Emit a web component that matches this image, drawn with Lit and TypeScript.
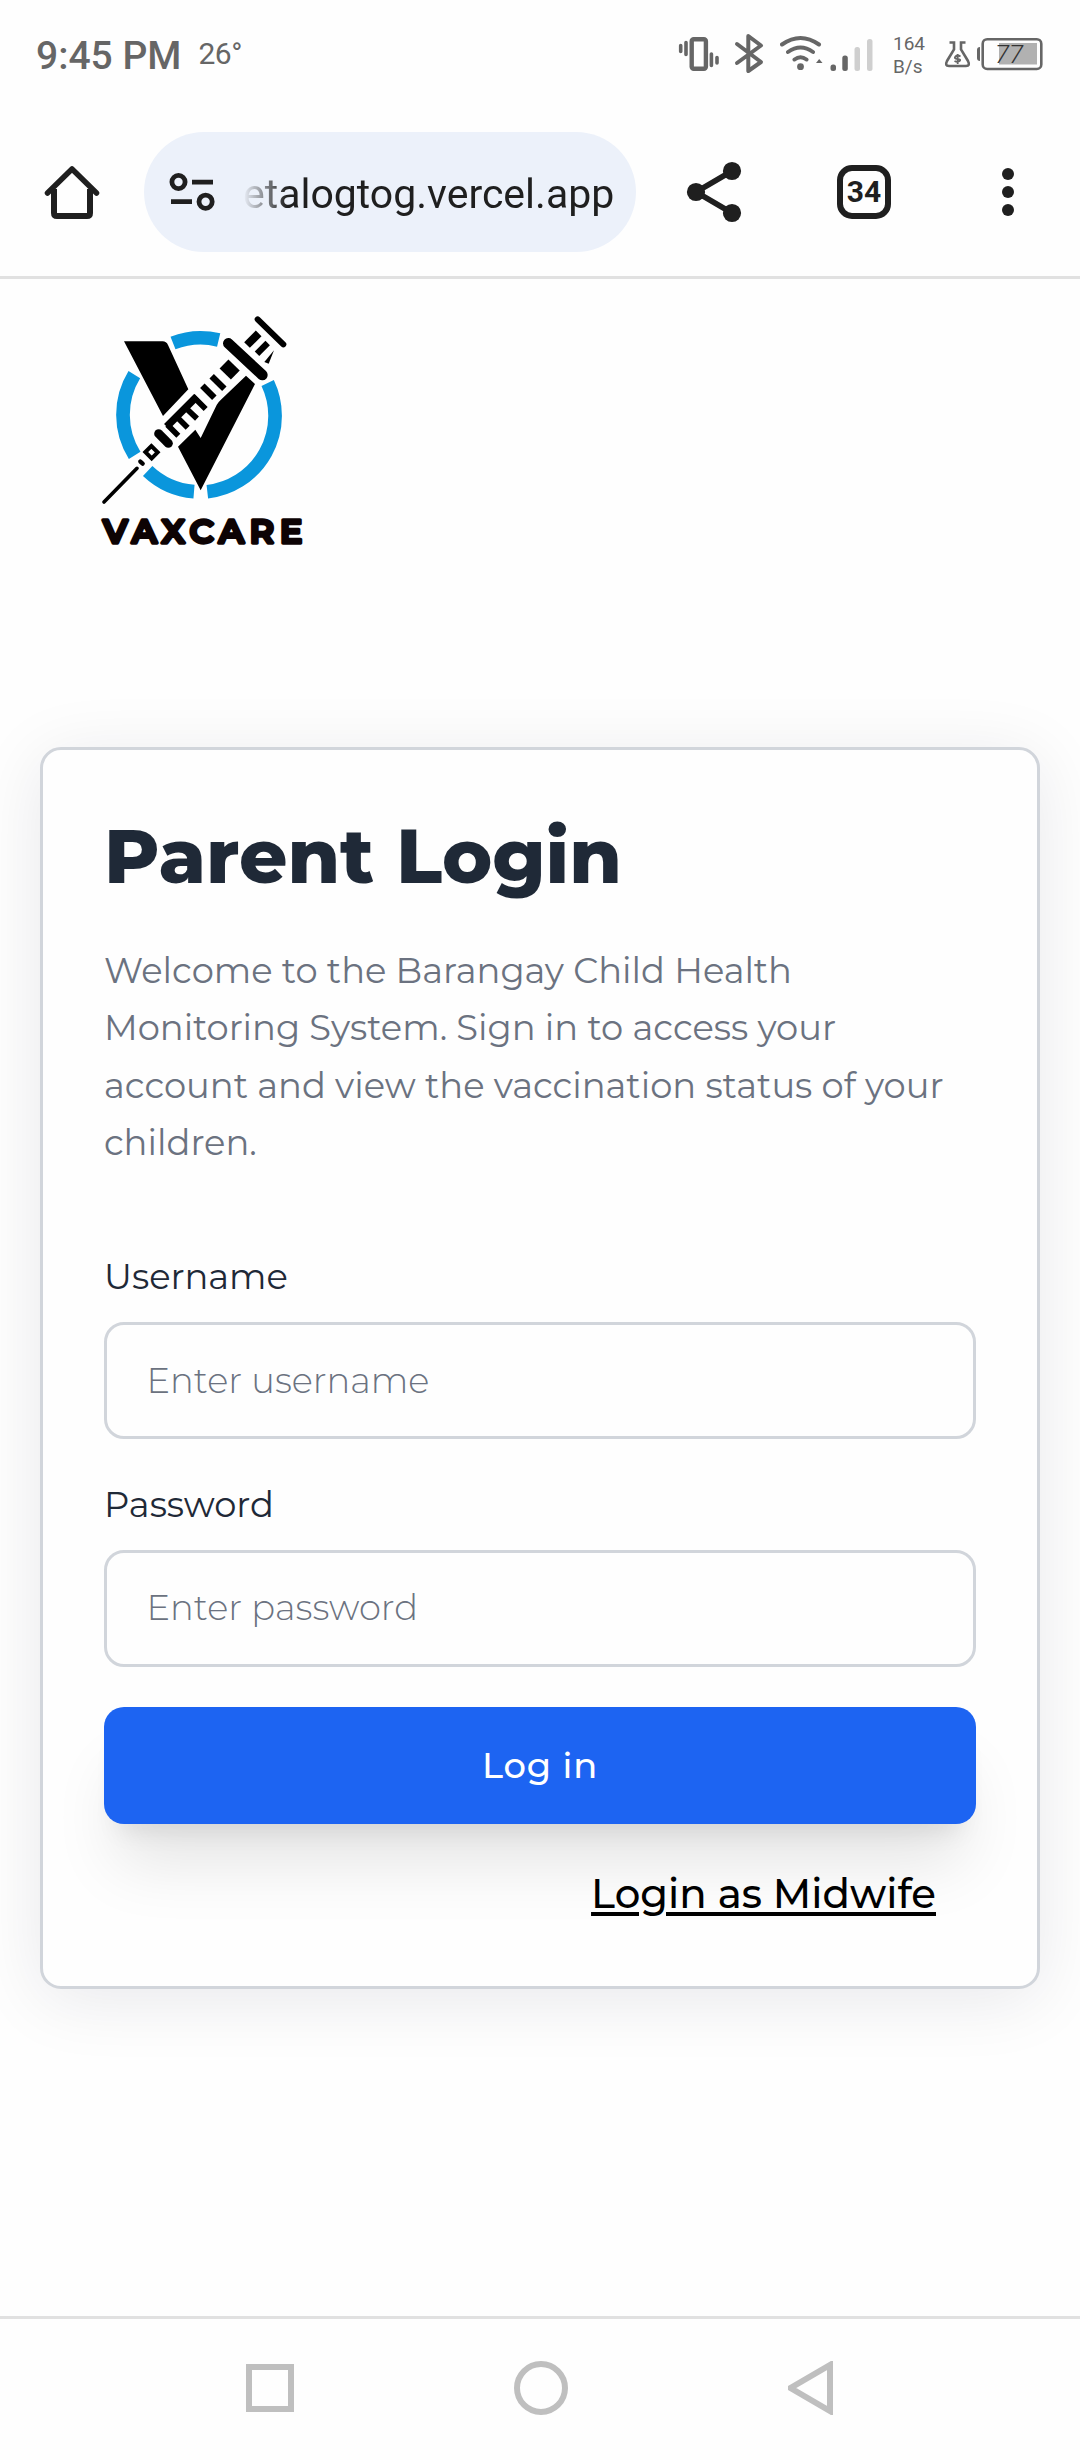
import { LitElement, html, css } from "lit";
import { customElement } from "lit/decorators.js";

@customElement("app-root")
export class AppRoot extends LitElement {
  static styles = css`
    :host { display: block; }
    * { box-sizing: border-box; margin: 0; }
    svg { display: block; flex: none; }
    .screen { width: 1080px; height: 2460px; background: #fefefe; display: flex; flex-direction: column; overflow: hidden; font-family: Montserrat, Inter, sans-serif; }
    .status { height: 110px; display: flex; align-items: flex-start; padding: 30px 37px 0 36px; color: #666; font-family: Roboto, sans-serif; }
    .time { font-size: 39px; font-weight: 500; line-height: 52px; white-space: nowrap; }
    .temp { font-size: 30px; line-height: 48px; margin-left: 17px; letter-spacing: -0.5px; }
    .icons { margin-left: auto; display: flex; }
    .bt { margin-left: 14px; }
    .wifi { margin-left: 16px; }
    .sig { margin-left: 7px; }
    .net { margin-left: 20px; width: 32px; font-size: 19px; line-height: 23px; padding-top: 2px; white-space: nowrap; }
    .flask { margin-left: 19px; }
    .bat { margin-left: 5px; }
    .toolbar { height: 169px; border-bottom: 3px solid #e1e1e1; padding: 22px 0 0 44px; display: flex; align-items: flex-start; }
    .pill { width: 492px; height: 120px; margin-left: 44px; border-radius: 60px; background: #ecf1fa; display: flex; align-items: center; padding-left: 25px; }
    .url { margin-left: 28px; width: 374px; font-family: Roboto, sans-serif; font-size: 41px; line-height: 60px; color: #1f1f1f; padding-top: 3px; white-space: nowrap; -webkit-mask-image: linear-gradient(90deg, transparent 0, #000 44px); mask-image: linear-gradient(90deg, transparent 0, #000 44px); }
    .share { margin-left: 48px; }
    .tabs { width: 54px; height: 54px; margin: 33px 0 0 93px; border: 6px solid #1f1f1f; border-radius: 15px; font: 700 30px/42px Roboto, sans-serif; color: #1f1f1f; display: flex; justify-content: center; }
    .more { margin-left: 108px; }
    .page { flex: 1; padding: 21px 40px 0; }
    .logo { margin-left: 50px; }
    .card { height: 1242px; margin-top: 187px; border: 3px solid #d1d5db; border-radius: 21px; padding: 66px 61px 0; background: #fefefe; box-shadow: 0 10px 70px rgba(15, 15, 40, 0.09); }
    .title { font-size: 75.6px; line-height: 80px; font-weight: 800; color: #1f2937; white-space: nowrap; }
    .intro { margin-top: 45.5px; font-size: 35.3px; line-height: 57.5px; color: #6b7280; white-space: nowrap; }
    .form { display: flex; flex-direction: column; padding-top: 80.5px; }
    .label { font-size: 35.3px; line-height: 50px; color: #1f2937; }
    .field { height: 117px; margin-top: 20px; border: 3px solid #d1d5db; border-radius: 20px; padding: 0 39.5px; background: transparent; font: 300 35.3px Montserrat, sans-serif; outline: none; width: 100%; }
    .field::placeholder { color: #6b7280; opacity: 1; }
    .password { padding-bottom: 2px; }
    .second { margin-top: 41px; }
    .submit { height: 117px; margin-top: 40px; border: 0; border-radius: 20px; background: #1d64f2; color: #fff; font: 500 35.3px Montserrat, sans-serif; letter-spacing: 0.88px; box-shadow: 0 52px 65px -13px rgba(0, 0, 0, 0.1), 0 21px 26px -16px rgba(0, 0, 0, 0.1); }
    .alt { align-self: flex-end; margin: 40px 40px 0 0; font-size: 40.3px; line-height: 60px; color: #000; font-weight: 500; text-decoration: underline; text-decoration-thickness: 4px; text-underline-offset: 4px; white-space: nowrap; }
    .nav { height: 144px; border-top: 3px solid #e1e1e1; display: flex; align-items: center; justify-content: space-between; padding: 0 246px 3px; }
  `;
  logo() {
    return html`<svg class="logo" width="230" height="260" viewBox="0 0 690 780">
      <g fill="none" stroke="#0a96dc" stroke-width="41">
        <path d="M249 129 A229 229 0 0 1 386 120"/>
        <path d="M133 224 A229 229 0 0 0 134 466"/>
        <path d="M173 513 A229 229 0 0 0 312 575"/>
        <path d="M352 575 A229 229 0 0 0 533 249"/>
      </g>
      <path d="M102 124H218Q229 124 234 135L295 268L219 348Z"/>
      <path d="M468 227L495 252L332 571L264 440L316 389L332 414L380 315Q384 307 392 300Z"/>
      <g stroke="#000" stroke-linecap="round" fill="none">
        <path d="M42 606L141 505" stroke-width="11"/>
        <path d="M151 485L158 491" stroke-width="13"/>
        <path d="M206 401L235 430" stroke-width="27"/>
        <path d="M415 130L517 225" stroke-width="32"/>
        <path d="M503 58L580 133" stroke-width="18"/>
      </g>
      <g stroke="#000" fill="none">
        <path d="M184 438L203 457L185 475L166 456Z" stroke-width="12"/>
        <path d="M230 380L320 290" stroke-width="22"/>
        <path d="M232 374L265 407M254 344L293 383M281 318L321 356M308 288L347 327" stroke-width="17"/>
        <path d="M337 257L373 293M365 229L403 266" stroke-width="19"/>
        <path d="M402 192L436 225" stroke-width="38"/>
        <path d="M471 135L506 100" stroke-width="24"/>
        <path d="M501 161L533 129" stroke-width="19"/>
      </g>
      <path d="M552 151L523 186L536 191Z"/>
      <text x="39" y="730" font-family="Montserrat, sans-serif" font-weight="600" font-size="101" textLength="598" lengthAdjust="spacing" fill="#0d0304" stroke="#0d0304" stroke-width="10" stroke-linejoin="round">VAXCARE</text>
    </svg>`;
  }
  render() {
    return html`<div class="screen">
      <div class="status">
        <span class="time">9:45 PM</span><span class="temp">26°</span>
        <div class="icons">
          <svg width="42" height="50" viewBox="678 30 42 50" fill="none" stroke="#666" stroke-linecap="round"><rect x="691.7" y="39.2" width="14.2" height="29.6" rx="2" stroke-width="4.4"/><path d="M680.7 45.5V51.5M686 42.5V54.5M711.4 54V65.5M717 57.5V63" stroke-width="3.6"/></svg>
          <svg class="bt" width="30" height="50" viewBox="734 30 30 50" fill="none" stroke="#666" stroke-width="4" stroke-linecap="round" stroke-linejoin="round"><path d="M737 44L761 62L748.3 71V36L761 45.5L737 63"/></svg>
          <svg class="wifi" width="43" height="50" viewBox="780 30 43 50" fill="none" stroke="#666" stroke-width="4" stroke-linecap="round"><path d="M782 44.5Q800.5 31.5 819 44.5M788 52Q800.5 43 813 52M794.5 59.5Q800.5 55 806.5 59.5"/><circle cx="800.5" cy="66.7" r="3.4" fill="#666" stroke="none"/><path d="M816 63H822.5L819.2 59Z" fill="#666" stroke="none"/></svg>
          <svg class="sig" width="43" height="50" viewBox="830 30 43 50"><g fill="#666"><rect x="830.5" y="64.5" width="5.5" height="6.5" rx="2.5"/><rect x="842.3" y="55.5" width="5.5" height="15.5" rx="2.5"/></g><g fill="#cfcfcf"><rect x="854.5" y="47" width="5.5" height="24" rx="2.5"/><rect x="867" y="39" width="5.5" height="32" rx="2.5"/></g></svg>
          <div class="net"><div>164</div><div>B/s</div></div>
          <svg class="flask" width="27" height="50" viewBox="944 30 27 50" fill="none" stroke="#666" stroke-width="2.6"><path d="M949.5 42.5H954V49.5L947 61Q944.5 66 949 66H966Q970.5 66 968 61L961 49.5V42.5H965.5"/><path d="M960.5 56.5Q957.500 54.5 955.5 56.5T957.5 59T959.5 61T954.5 61M957.7 54V64" stroke-width="1.8"/></svg>
          <svg class="bat" width="67" height="50" viewBox="976 30 67 50"><path d="M980 47Q977 47 977 50V58Q977 61 980 61Z" fill="#666"/><rect x="982.7" y="39.2" width="58.6" height="29.8" rx="4.5" fill="none" stroke="#666" stroke-width="2.6"/><rect x="999" y="43" width="38" height="21.5" fill="#b1b1b1"/><text x="995" y="63" font-family="Roboto, sans-serif" font-style="italic" font-weight="300" font-size="26" fill="#333">77</text></svg>
        </div>
      </div>
      <div class="toolbar">
        <svg width="56" height="120" viewBox="44 132 56 120" fill="none" stroke="#1f1f1f" stroke-width="6"><path d="M47.5 193L72 169L96.500 193" stroke-linecap="round" stroke-linejoin="round" stroke-width="5.5"/><path d="M54 189V213Q54 216 57 216H87Q90 216 90 213V189"/></svg>
        <div class="pill">
          <svg width="46" height="120" viewBox="169 132 46 120" fill="none" stroke="#1f1f1f" stroke-width="4.8"><circle cx="178.5" cy="182" r="6.6"/><path d="M192 182.2H213M171 201.7H192"/><circle cx="205.6" cy="201.7" r="6.6"/></svg>
          <div class="url">etalogtog.vercel.app</div>
        </div>
        <svg class="share" width="60" height="120" viewBox="684 132 60 120" fill="#1f1f1f"><path d="M732 171L696 192L732 213" fill="none" stroke="#1f1f1f" stroke-width="5.5"/><circle cx="732" cy="171" r="9.1"/><circle cx="696" cy="192" r="9.1"/><circle cx="732" cy="213" r="9.1"/></svg>
        <div class="tabs">34</div>
        <svg class="more" width="18" height="120" viewBox="999 132 18 120" fill="#1f1f1f"><circle cx="1008" cy="174" r="6"/><circle cx="1008" cy="192" r="6"/><circle cx="1008" cy="210" r="6"/></svg>
      </div>
      <main class="page">
        ${this.logo()}
        <section class="card">
          <h1 class="title">Parent Login</h1>
          <p class="intro">Welcome to the Barangay Child Health<br>Monitoring System. Sign in to access your<br>account and view the vaccination status of your<br>children.</p>
          <div class="form">
            <label class="label">Username</label>
            <input class="field" placeholder="Enter username">
            <label class="label second">Password</label>
            <input class="field password" type="password" placeholder="Enter password">
            <button class="submit">Log in</button>
            <a class="alt">Login as Midwife</a>
          </div>
        </section>
      </main>
      <div class="nav">
        <svg width="48" height="54" viewBox="246 2361 48 54" fill="none" stroke="#bfbfbf" stroke-width="6"><rect x="249" y="2367" width="42" height="42"/></svg>
        <svg width="54" height="54" viewBox="513 2361 54 54" fill="none" stroke="#bfbfbf" stroke-width="6"><circle cx="540" cy="2388" r="24"/></svg>
        <svg width="46" height="54" viewBox="788 2361 46 54" fill="none" stroke="#bfbfbf" stroke-width="6"><path d="M830 2365V2411L790.5 2388Z"/></svg>
      </div>
    </div>`;
  }
}
